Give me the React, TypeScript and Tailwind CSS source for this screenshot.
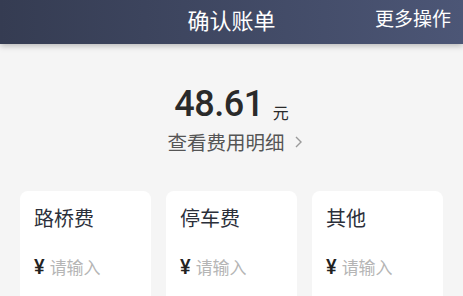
import React from "react";

const font = { fontFamily: '"Noto Sans CJK SC", "Noto Sans", sans-serif' };

function Card({ title }: { title: string }) {
  return (
    <div className="flex-1 bg-white rounded-[8px] h-[130px] px-[14px] pt-[13px]">
      <div className="text-[20px] leading-[28px] text-[#2b2f3a]">{title}</div>
      <div className="mt-[23px] flex items-center text-[17px] leading-[24px]">
        <span className="text-[#222] text-[20px] font-medium mr-[5px]" style={{ fontFamily: '"Roboto", sans-serif' }}>¥</span>
        <span className="text-[#b5b5b5]">请输入</span>
      </div>
    </div>
  );
}

export default function App() {
  return (
    <div className="w-[463px] h-[296px] overflow-hidden bg-[#f5f5f5]" style={font}>
      <div className="relative h-[44px] bg-gradient-to-r from-[#353c52] to-[#4c5676] shadow-[0_2px_6px_rgba(0,0,0,0.25)] flex items-center justify-center">
        <span className="text-white text-[22px] leading-[30px] -mt-[6px]">确认账单</span>
        <span className="absolute right-[12px] top-[5px] text-white text-[19px] leading-[26px]">更多操作</span>
      </div>
      <div className="flex flex-col items-center pt-[42px]">
        <div className="flex items-end">
          <span className="text-[36px] leading-[36px] font-medium text-[#2a2a2a] tracking-[-0.5px]" style={{ fontFamily: '"Roboto", "Noto Sans", sans-serif' }}>48.61</span>
          <span className="text-[16px] leading-[22px] text-[#2a2a2a] ml-[9px] mb-[-1px]">元</span>
        </div>
        <div className="flex items-center mt-[6px] text-[19.5px] leading-[28px] text-[#555] ml-[8px]">
          <span>查看费用明细</span>
          <svg width="10" height="14" viewBox="0 0 10 14" className="ml-[9px]">
            <path d="M2 2 L7 7 L2 12" fill="none" stroke="#9a9a9a" strokeWidth="1.4" />
          </svg>
        </div>
      </div>
      <div className="flex gap-[15px] px-[20px] mt-[35px]">
        <Card title="路桥费" />
        <Card title="停车费" />
        <Card title="其他" />
      </div>
    </div>
  );
}
